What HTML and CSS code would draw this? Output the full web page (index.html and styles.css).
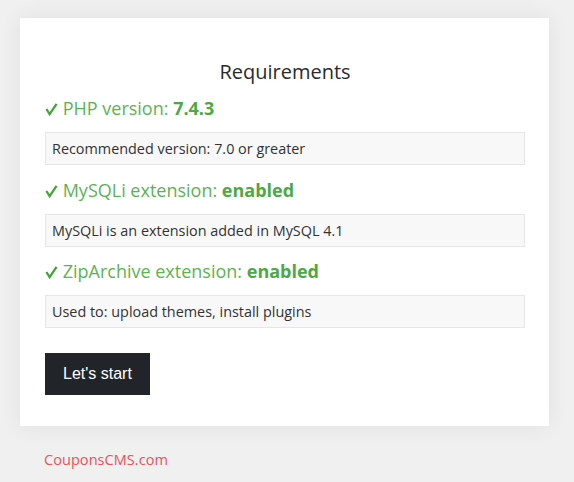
FILE: index.html
```html
<!DOCTYPE html>
<html lang="en">
<head>
<meta charset="UTF-8">
<meta name="viewport" content="width=device-width, initial-scale=1.0">
<title>Install - Requirements</title>
<link rel="stylesheet" href="styles.css">
</head>
<body>
<div class="container">
  <h2>Requirements</h2>
  <div class="req">
    <div class="req-title"><svg class="tick" viewBox="0 0 14 14"><polyline points="1.5,7 5,12.5 12.5,1.5"/></svg> PHP version: <b>7.4.3</b></div>
    <div class="req-note">Recommended version: 7.0 or greater</div>
  </div>
  <div class="req">
    <div class="req-title"><svg class="tick" viewBox="0 0 14 14"><polyline points="1.5,7 5,12.5 12.5,1.5"/></svg> MySQLi extension: <b>enabled</b></div>
    <div class="req-note">MySQLi is an extension added in MySQL 4.1</div>
  </div>
  <div class="req">
    <div class="req-title"><svg class="tick" viewBox="0 0 14 14"><polyline points="1.5,7 5,12.5 12.5,1.5"/></svg> ZipArchive extension: <b>enabled</b></div>
    <div class="req-note">Used to: upload themes, install plugins</div>
  </div>
  <button type="button" class="btn">Let's start</button>
</div>
<div class="footer">CouponsCMS.com</div>
</body>
</html>
```
FILE: styles.css
```css
body {
  font-family: "Open Sans", "DejaVu Sans", sans-serif;
  margin: 0;
  padding: 0;
  background-color: #f0f0f0;
  color: #333;
}
.container {
  width: 529px;
  box-sizing: border-box;
  margin: 18px 0 0 20px;
  background-color: #fff;
  padding: 42px 24px 31px 25px;
  box-shadow: 0 0 22px rgba(0, 0, 0, 0.07);
}
h2 {
  margin: 0 0 12px;
  font-size: 20px;
  line-height: 24px;
  font-weight: 500;
  text-align: center;
  color: #2b2b2b;
}
.req {
  margin-bottom: 12.5px;
}
.req-title {
  font-size: 18px;
  line-height: 24px;
  color: #5cb352;
  margin-bottom: 12px;
}
.req-title b {
  font-weight: 700;
  color: #4ea844;
}
.tick {
  width: 13px;
  height: 14px;
  vertical-align: -1px;
  fill: none;
  stroke: #46a33c;
  stroke-width: 2.5;
}
.req-note {
  background-color: #f8f8f8;
  border: 1px solid #e6e6e6;
  padding: 6px;
  font-size: 14.4px;
  line-height: 19px;
  color: #333;
}
.btn {
  margin-top: 25px;
  background-color: #212529;
  color: #fff;
  font-family: "Liberation Sans", Arial, sans-serif;
  font-size: 16px;
  line-height: 42px;
  padding: 0 18px;
  border: none;
  border-radius: 0;
  cursor: pointer;
  display: block;
}
.footer {
  margin: 23px 0 0 44px;
  font-size: 14.6px;
  line-height: 20px;
  color: #e9525e;
}
```
